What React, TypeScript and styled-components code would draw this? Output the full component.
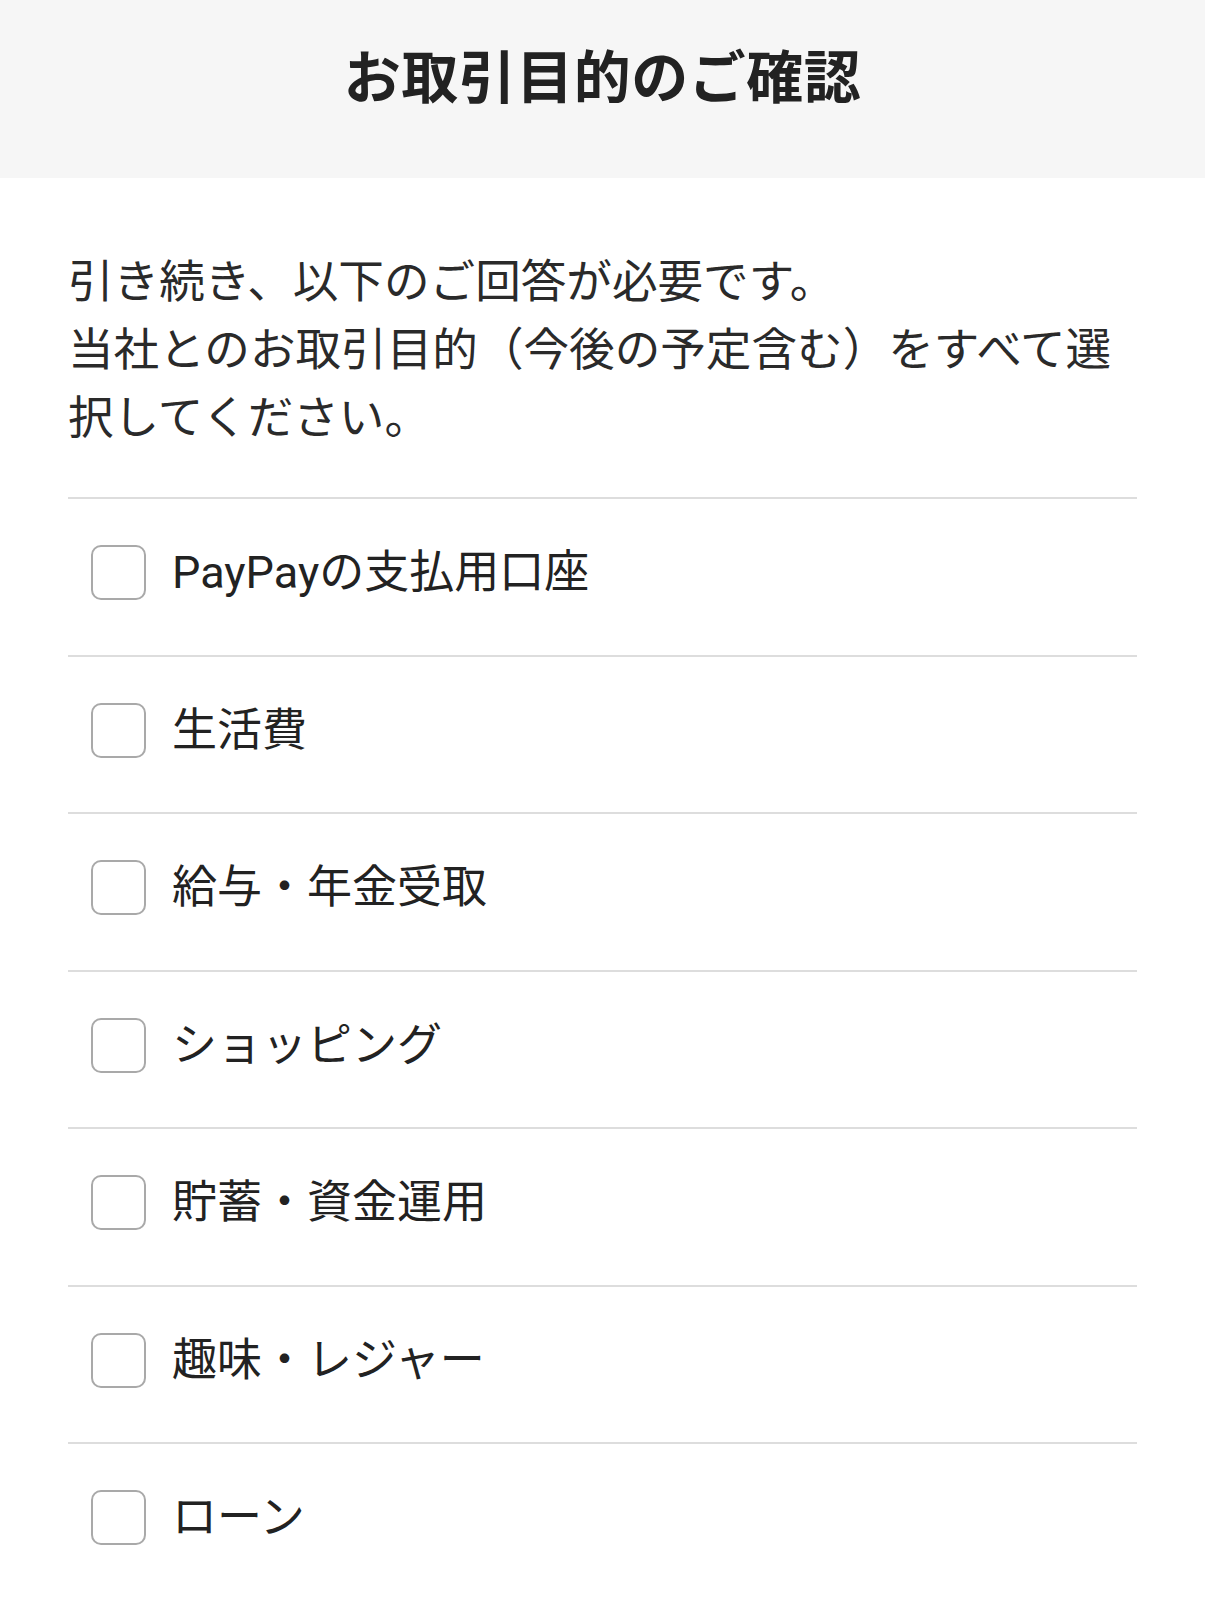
import React from "react";
import styled, { createGlobalStyle } from "styled-components";

const GlobalStyle = createGlobalStyle`
  html, body {
    margin: 0;
    padding: 0;
    background: #ffffff;
  }
  body {
    font-family: Roboto, "Noto Sans CJK JP", sans-serif;
    color: #222222;
  }
`;

const Page = styled.div`
  width: 1205px;
  min-height: 1600px;
  background: #ffffff;
`;

const Header = styled.header`
  height: 178px;
  box-sizing: border-box;
  padding-bottom: 32px;
  background: #f6f6f6;
  display: flex;
  align-items: center;
  justify-content: center;
`;

const Title = styled.h1`
  margin: 0;
  font-family: "Noto Sans CJK JP", sans-serif;
  font-weight: 700;
  font-size: 57px;
  letter-spacing: 0.5px;
  color: #222222;
  line-height: 1;
`;

const Content = styled.main`
  padding: 66px 68px 0;
`;

const Lead = styled.p`
  margin: 0 0 49px;
  font-family: "Noto Sans CJK JP", sans-serif;
  font-size: 45.6px;
  line-height: 68px;
  color: #2a2a2a;
`;

const List = styled.ul`
  list-style: none;
  margin: 0;
  padding: 0;
`;

const Row = styled.li`
  height: 157.5px;
  box-sizing: border-box;
  border-top: 2px solid #dddddd;
  display: flex;
  align-items: center;
  padding-left: 23px;
  padding-bottom: 8px;
  gap: 26px;
`;

const Box = styled.span`
  width: 55px;
  height: 55px;
  box-sizing: border-box;
  border: 2px solid #a9a9a9;
  border-radius: 10px;
  background: #ffffff;
  flex: none;
`;

const Label = styled.span`
  font-family: Roboto, "Noto Sans CJK JP", sans-serif;
  font-size: 45px;
  color: #222222;
  line-height: 1;
`;

const items = [
  "PayPayの支払用口座",
  "生活費",
  "給与・年金受取",
  "ショッピング",
  "貯蓄・資金運用",
  "趣味・レジャー",
  "ローン",
];

export default function App() {
  return (
    <Page>
      <GlobalStyle />
      <Header>
        <Title>お取引目的のご確認</Title>
      </Header>
      <Content>
        <Lead>
          引き続き、以下のご回答が必要です。
          <br />
          当社とのお取引目的（今後の予定含む）をすべて選択してください。
        </Lead>
        <List>
          {items.map((item) => (
            <Row key={item}>
              <Box />
              <Label>{item}</Label>
            </Row>
          ))}
        </List>
      </Content>
    </Page>
  );
}
